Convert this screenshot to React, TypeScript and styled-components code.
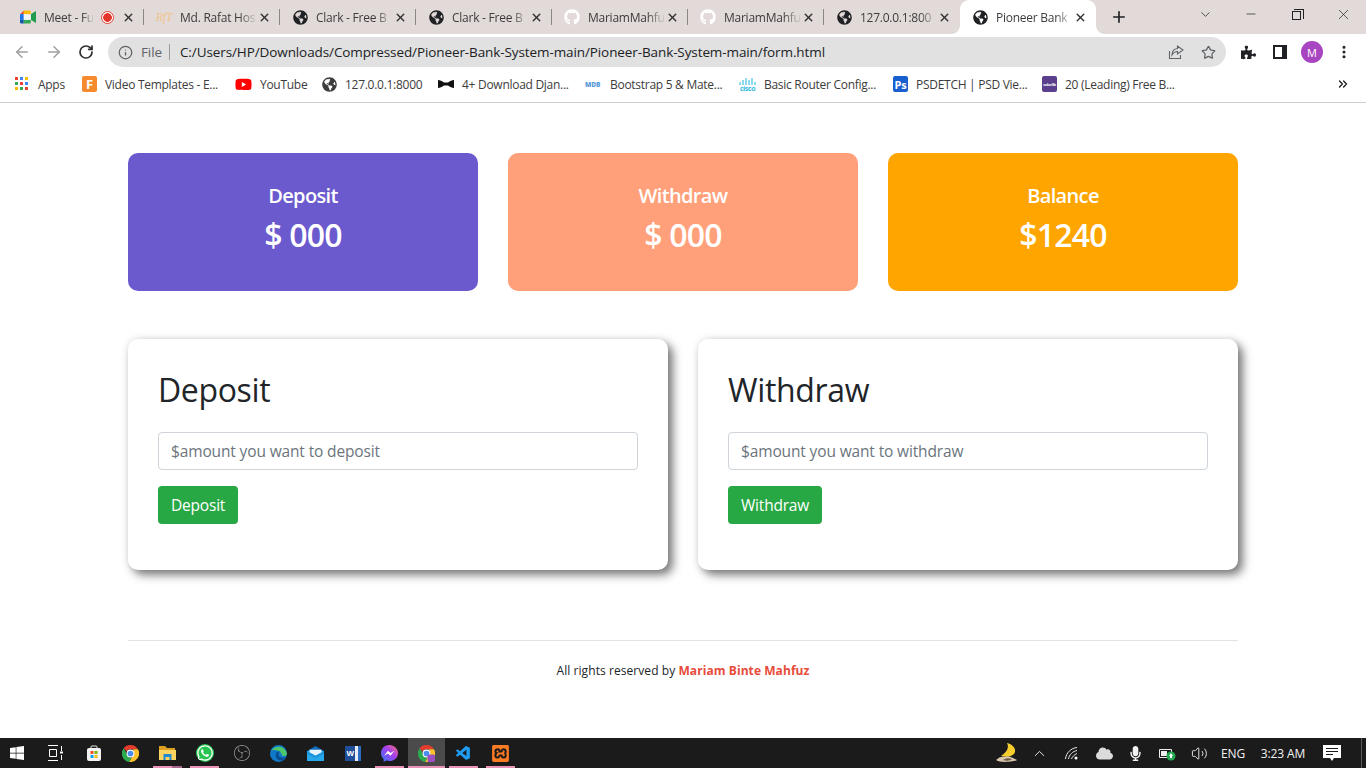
import React from 'react';
import styled, { createGlobalStyle } from 'styled-components';
import {
  ArrowLeft,
  ArrowRight,
  ChevronDown,
  ChevronUp,
  ChevronsRight,
  Info,
  Minus,
  MoreVertical,
  Plus,
  RotateCw,
  Star,
  Volume2,
  X,
} from 'lucide-react';
import { FaGithub, FaGlobeAmericas, FaPuzzlePiece, FaWhatsapp, FaWindows, FaYoutube, FaCloud, FaMicrophone } from 'react-icons/fa';
import { SiObsstudio, SiXampp } from 'react-icons/si';
import { VscVscode } from 'react-icons/vsc';

const GlobalStyle = createGlobalStyle`
  html, body {
    margin: 0;
    padding: 0;
    height: 100%;
    overflow: hidden;
    background: #fff;
  }
  * {
    box-sizing: border-box;
  }
  body {
    font-family: "Open Sans", "Noto Sans", "Liberation Sans", sans-serif;
    color: #212529;
  }
`;

const Screen = styled.div`
  width: 1366px;
  height: 768px;
  display: flex;
  flex-direction: column;
  overflow: hidden;
`;

/* browser chrome */

const TabStrip = styled.div`
  height: 34px;
  flex: none;
  display: flex;
  align-items: stretch;
  padding-left: 8px;
  background: #e2dad8;
`;

const Tab = styled.div<{ $active?: boolean; $divided?: boolean }>`
  position: relative;
  width: 136px;
  flex: none;
  display: flex;
  align-items: center;
  padding: 0 9.5px 0 12px;
  gap: 8px;
  font-size: 12px;
  letter-spacing: -0.25px;
  color: #3c3c3c;
  background: ${(p) => (p.$active ? '#fff' : 'transparent')};
  border-radius: ${(p) => (p.$active ? '9px 9px 0 0' : '0')};

  &::after {
    content: '';
    display: ${(p) => (p.$divided ? 'block' : 'none')};
    position: absolute;
    right: 0;
    top: 9px;
    bottom: 9px;
    width: 1px;
    background: #8b8584;
  }
`;

const TabFlare = styled.span<{ $side: 'left' | 'right' }>`
  position: absolute;
  bottom: 0;
  ${(p) => p.$side}: -8px;
  width: 8px;
  height: 8px;
  background: radial-gradient(
    circle at ${(p) => (p.$side === 'left' ? '0 0' : '100% 0')},
    transparent 7.5px,
    #fff 8px
  );
`;

const TabTitle = styled.span`
  flex: 1;
  min-width: 0;
  overflow: hidden;
  white-space: nowrap;
  -webkit-mask-image: linear-gradient(90deg, #000 78%, rgba(0, 0, 0, 0.1));
  mask-image: linear-gradient(90deg, #000 78%, rgba(0, 0, 0, 0.1));
`;

const Favicon = styled.span`
  width: 16px;
  height: 16px;
  flex: none;
  display: flex;
  align-items: center;
  justify-content: center;
  color: #202124;
`;

const TabClose = styled.span`
  width: 13px;
  flex: none;
  margin-left: -6px;
  display: flex;
  color: #303030;
`;

const RecordDot = styled.span`
  width: 13px;
  height: 13px;
  flex: none;
  margin-right: 6px;
  border-radius: 50%;
  border: 1px solid #e0463b;
  background: radial-gradient(circle, #e3352a 0 4px, #fff 4.6px);
`;

const NewTab = styled.div`
  width: 46px;
  display: flex;
  align-items: center;
  justify-content: center;
  color: #202124;
`;

const WindowControls = styled.div`
  margin-left: auto;
  display: flex;
`;

const WindowButton = styled.div`
  width: 46px;
  padding-bottom: 6px;
  display: flex;
  align-items: center;
  justify-content: center;
  color: #202124;
`;

const RestoreIcon = styled.span`
  position: relative;
  width: 9px;
  height: 9px;
  margin: 2px 0 0 -2px;
  border: 1px solid #202124;

  &::before {
    content: '';
    position: absolute;
    left: 1px;
    top: -3px;
    width: 9px;
    height: 9px;
    border-top: 1px solid #202124;
    border-right: 1px solid #202124;
  }
`;

const Toolbar = styled.div`
  height: 36px;
  flex: none;
  display: flex;
  align-items: center;
  padding-left: 6px;
  background: #fff;
`;

const NavButton = styled.div<{ $dim?: boolean }>`
  width: 32px;
  height: 32px;
  flex: none;
  display: flex;
  align-items: center;
  justify-content: center;
  color: ${(p) => (p.$dim ? '#a0a0a0' : '#303030')};
`;

const AddressBar = styled.div`
  width: 1118px;
  height: 30px;
  margin-left: 6px;
  flex: none;
  display: flex;
  align-items: center;
  padding: 0 10px;
  border-radius: 15px;
  background: #e1e1e1;
  font-size: 13.5px;
  letter-spacing: -0.1px;
`;

const SiteInfo = styled.span`
  display: flex;
  align-items: center;
  gap: 8px;
  color: #5f6368;
  padding-right: 7px;
  margin-right: 10px;
  border-right: 1px solid #9a9a9a;
  line-height: 16px;
`;

const Url = styled.span`
  flex: 1;
  color: #202124;
`;

const AddressActions = styled.span`
  display: flex;
  align-items: center;
  gap: 17px;
  color: #5f6368;
`;

const ProfileTools = styled.div`
  display: flex;
  align-items: center;
  margin-left: 6px;
  color: #202124;
`;

const ProfileTool = styled.span`
  width: 32px;
  flex: none;
  display: flex;
  align-items: center;
  justify-content: center;
`;

const SidePanelIcon = styled.span`
  width: 14px;
  height: 14px;
  border: 2px solid #202124;
  border-right-width: 5px;
`;

const Avatar = styled.span`
  width: 22px;
  height: 22px;
  border-radius: 50%;
  background: #a845c0;
  color: #fff;
  font-size: 11px;
  display: flex;
  align-items: center;
  justify-content: center;
`;

const BookmarkBar = styled.div`
  height: 33px;
  flex: none;
  display: flex;
  align-items: center;
  padding: 0 0 4px 15px;
  background: #fff;
  border-bottom: 1px solid #cfcfcf;
  font-size: 12px;
  letter-spacing: -0.28px;
  color: #3c3c3c;
`;

const Bookmark = styled.div<{ $width: number }>`
  width: ${(p) => p.$width}px;
  flex: none;
  display: flex;
  align-items: center;
  gap: 8px;
  white-space: nowrap;
`;

const BookmarkOverflow = styled.div`
  margin-left: auto;
  padding-right: 16px;
  display: flex;
  color: #202124;
`;

const AppsGrid = styled.span`
  width: 15px;
  height: 14px;
  flex: none;
  display: grid;
  grid-template-columns: repeat(3, 3px);
  grid-auto-rows: 3px;
  gap: 2px;
`;

const AppsDot = styled.i<{ $color: string }>`
  background: ${(p) => p.$color};
`;

const BadgeIcon = styled.span<{ $bg: string; $size?: number }>`
  width: 15px;
  height: 16px;
  flex: none;
  display: flex;
  align-items: center;
  justify-content: center;
  overflow: hidden;
  border-radius: 2px;
  background: ${(p) => p.$bg};
  color: #fff;
  font-weight: 700;
  letter-spacing: -0.3px;
  font-size: ${(p) => p.$size || 11}px;
`;

const MdbMark = styled.span`
  width: 17px;
  flex: none;
  font-size: 6.5px;
  letter-spacing: 0;
  font-weight: 800;
  color: #5a9bd8;
`;

const CiscoMark = styled.span`
  width: 17px;
  flex: none;
  display: flex;
  flex-direction: column;
  align-items: center;
  color: #19b5dc;
  font: 700 6.5px/6px "Liberation Sans", sans-serif;
`;

/* page */

const Page = styled.main`
  flex: 1;
  min-height: 0;
  display: flex;
  flex-direction: column;
  align-items: center;
  padding-top: 50px;
  background: #fff;
`;

const Container = styled.div`
  width: 1110px;
`;

const StatRow = styled.section`
  display: grid;
  grid-template-columns: repeat(3, 1fr);
  gap: 30px;
`;

const StatCard = styled.div<{ $bg: string }>`
  height: 138px;
  display: flex;
  flex-direction: column;
  align-items: center;
  justify-content: center;
  padding-bottom: 4px;
  border-radius: 10px;
  background: ${(p) => p.$bg};
  color: #fff;
  font-weight: 600;
`;

const StatLabel = styled.div`
  font-size: 20px;
  letter-spacing: -0.65px;
  line-height: 28px;
`;

const StatValue = styled.div`
  font-size: 32px;
  letter-spacing: -0.8px;
  line-height: 48px;
  margin-top: 1px;
`;

const FormRow = styled.section`
  display: grid;
  grid-template-columns: repeat(2, 1fr);
  gap: 30px;
  margin-top: 48px;
`;

const FormCard = styled.form`
  height: 231px;
  padding: 30px;
  border-radius: 10px;
  background: #fff;
  box-shadow: 5px 5px 10px rgba(0, 0, 0, 0.5), 0 0 8px rgba(0, 0, 0, 0.1);
`;

const FormTitle = styled.h2`
  margin: 0 0 21px;
  font-size: 32px;
  font-weight: 500;
  letter-spacing: -0.35px;
  line-height: 42px;
  color: #212529;
`;

const AmountInput = styled.input`
  display: block;
  width: 100%;
  height: 38px;
  padding: 0 12px;
  border: 1px solid #ced4da;
  border-radius: 4px;
  font: inherit;
  font-size: 15.5px;
  letter-spacing: -0.14px;
  color: #495057;

  &::placeholder {
    color: #6c757d;
    opacity: 1;
  }
`;

const SubmitButton = styled.button`
  display: block;
  height: 38px;
  margin-top: 16px;
  padding: 0 13px;
  border: 0;
  border-radius: 4px;
  background: #28a745;
  color: #fff;
  font: inherit;
  font-size: 15.5px;
  letter-spacing: -0.2px;
`;

const Footer = styled.footer`
  margin-top: 70px;
  border-top: 1px solid #e3e3e3;
  padding-top: 21px;
  text-align: center;
  font-size: 12px;
  letter-spacing: 0.07px;
  line-height: 18px;
`;

const Author = styled.span`
  color: #e74c3c;
  font-weight: 700;
`;

/* taskbar */

const Taskbar = styled.footer`
  height: 30px;
  flex: none;
  display: flex;
  align-items: stretch;
  background: #1b1b1b;
  color: #f2f2f2;
`;

const StartButton = styled.div`
  width: 34px;
  display: flex;
  align-items: center;
  justify-content: center;
  color: #fff;
`;

const TaskItem = styled.div<{ $width?: number; $active?: boolean; $open?: boolean; $stacked?: boolean }>`
  position: relative;
  width: ${(p) => p.$width || 37}px;
  flex: none;
  display: flex;
  align-items: center;
  justify-content: center;
  background: ${(p) => (p.$active ? '#4b4b4b' : 'transparent')};

  &::after {
    content: '';
    display: ${(p) => (p.$open ? 'block' : 'none')};
    position: absolute;
    left: ${(p) => (p.$active ? 0 : 4)}px;
    right: ${(p) => (p.$active ? 0 : 4)}px;
    bottom: 0;
    height: 2px;
    background: ${(p) => (p.$stacked ? 'linear-gradient(90deg, #eb92b8 0 66%, #a8678a 66%)' : '#eb92b8')};
  }
`;

const Tray = styled.div`
  margin-left: auto;
  display: flex;
  align-items: center;
  font-size: 12px;
  letter-spacing: -0.1px;
`;

const TrayItem = styled.div<{ $width: number }>`
  width: ${(p) => p.$width}px;
  flex: none;
  display: flex;
  align-items: center;
  justify-content: center;
  color: #f2f2f2;
  white-space: nowrap;
`;

const ShowDesktop = styled.div`
  width: 5px;
  height: 30px;
  margin-left: 12px;
  border-left: 1px solid #5a5a5a;
`;

const Globe = () => <FaGlobeAmericas size={15} />;

const MeetIcon = () => (
  <svg width="17" height="14" viewBox="0 0 17 14">
    <path d="M0 4 4 0v4z" fill="#ea4335" />
    <path d="M4 0h6a1.500 1.500 0 0 1 1.500 1.500V4H4z" fill="#fbbc04" />
    <path d="M0 4h4v6H0z" fill="#1a73e8" />
    <path d="M0 10h4v4H1.500A1.500 1.500 0 0 1 0 12.500z" fill="#1558b0" />
    <path d="M4 10h7.500v2.500A1.500 1.500 0 0 1 10 14H4z" fill="#34a853" />
    <path d="M11.500 4v6L17 13.500V.5z" fill="#1f9d4d" />
    <path d="M4 4h7.500v6H4z" fill="#f4f4f4" />
  </svg>
);

const ChromeIcon = ({ badge }: { badge?: boolean }) => (
  <svg width="17" height="17" viewBox="0 0 16 16">
    <path d="M8 0a8 8 0 0 1 7 4H8a4 4 0 0 0-3.600 2.200L1.600 3A8 8 0 0 1 8 0z" fill="#e33b2e" />
    <path d="M1.600 3l3 5.200A4 4 0 0 0 9 11.800L6.800 15.900A8 8 0 0 1 1.600 3z" fill="#2da94f" />
    <path d="M15 4a8 8 0 0 1-8.200 11.900L10 10a4 4 0 0 0 0-6z" fill="#fdc12d" />
    <circle cx="8" cy="8" r="3.200" fill="#4a8cf0" stroke="#fff" />
    {badge && <rect x="9" y="9" width="7" height="7" rx="1.500" fill="#9b4fc0" />}
  </svg>
);

const TaskView = () => (
  <svg width="16" height="16" viewBox="0 0 16 16" fill="none" stroke="#fff">
    <path d="M1 .5h10M1 15.500h10M2.500 4.500h7v7h-7zM14.500 1v5M14.500 10v5" />
    <path d="M13 7.500h3" strokeWidth="2" />
  </svg>
);

const StoreIcon = () => (
  <svg width="16" height="16" viewBox="0 0 16 16">
    <rect x="1" y="3" width="14" height="13" rx="2" fill="#f4f4f4" />
    <path d="M5 4V2a1 1 0 0 1 1-1h4a1 1 0 0 1 1 1v2" fill="none" stroke="#e8e8e8" />
    <rect x="4.500" y="6" width="3" height="3" fill="#f25022" />
    <rect x="8.500" y="6" width="3" height="3" fill="#7fba00" />
    <rect x="4.500" y="10" width="3" height="3" fill="#00a4ef" />
    <rect x="8.500" y="10" width="3" height="3" fill="#ffb900" />
  </svg>
);

const FolderIcon = () => (
  <svg width="17" height="16" viewBox="0 0 17 16">
    <path d="M0 1h6l2 2h8v3H0z" fill="#dd9f20" />
    <path d="M0 5h17v10H0z" fill="#fcd462" />
    <path d="M4.500 9h8v6h-2v-3h-4v3h-2z" fill="#1f8ad2" />
  </svg>
);

const EdgeIcon = () => (
  <svg width="17" height="17" viewBox="0 0 16 16">
    <circle cx="8" cy="8" r="8" fill="#0f78c8" />
    <path d="M1 6c2-5 12-7 15 2 0 3-5 3-5 1 0-3-8-6-10-3z" fill="#4ec76c" />
    <path d="M6 12c-2-4 1-7 4-6-3 0-3 6 2 6 1 0 2 0 3-1-2 4-7 5-9 1z" fill="#0a4c91" />
  </svg>
);

const MailIcon = () => (
  <svg width="17" height="15" viewBox="0 0 17 15">
    <path d="M0 5 8.500 0 17 5v10H0z" fill="#0f6cbd" />
    <path d="M0 5h17v10H0z" fill="#28a8ea" />
    <path d="M2.500 3.800h12V6.500l-6 3-6-3z" fill="#e8f4fc" />
    <path d="M0 5l8.500 5L17 5v3l-8.500 4L0 8z" fill="#1b93dd" />
  </svg>
);

const WordIcon = styled.span`
  width: 16px;
  height: 15px;
  display: flex;
  align-items: center;
  padding-left: 2px;
  background: linear-gradient(90deg, #1e4f98 0 62%, #e7eef8 62% 80%, #2b6bc0 80%);
  color: #fff;
  font: 700 8px "Liberation Sans", sans-serif;
`;

const MessengerIcon = () => (
  <svg width="17" height="17" viewBox="0 0 16 16">
    <defs>
      <linearGradient id="messengerFill" x1="0" y1="1" x2="1" y2="0">
        <stop offset="0" stopColor="#2f7bf6" />
        <stop offset="0.55" stopColor="#a33ff0" />
        <stop offset="1" stopColor="#fb6f7a" />
      </linearGradient>
    </defs>
    <path d="M8 0C3.500 0 0 3.300 0 7.700c0 2.300 1 4.300 2.500 5.700V16l2.500-1.300c1 .3 2 .4 3 .4 4.500 0 8-3.300 8-7.400S12.500 0 8 0z" fill="url(#messengerFill)" />
    <path d="M3 10l3.500-4.500 2.500 2 3.500-2-3.500 4.500-2.500-2z" fill="#fff" />
  </svg>
);

const CiscoBars = () => (
  <svg width="17" height="9" viewBox="0 0 17 9" stroke="#19b5dc" strokeWidth="1">
    <path d="M1 5v3M4 3v5M7 1v7M10 3v5M13 1v7M16 5v3" />
  </svg>
);

const WifiIcon = () => (
  <svg width="16" height="16" viewBox="0 0 16 16" fill="none" stroke="#e8e8e8">
    <path d="M1.500 14C2 8 7 3 13 2.500M4.500 14C5 10 9 6 13 5.500M7.500 14C8 12 10.500 9.500 13 8.500" />
    <circle cx="12" cy="13" r="1.500" fill="#fff" stroke="none" />
  </svg>
);

const BatteryIcon = () => (
  <svg width="17" height="15" viewBox="0 0 17 15">
    <path d="M.5 3.500h12v8H.5z" fill="none" stroke="#eee" />
    <path d="M2 5h6v5H2z" fill="#eee" />
    <circle cx="12" cy="10" r="4.500" fill="#23a84f" />
    <path d="M12 7l2 3h-1v2h-2v-2h-1z" fill="#fff" />
  </svg>
);

const MoonIcon = () => (
  <svg width="24" height="22" viewBox="0 0 24 22">
    <path d="M12 1c2 4 1 8-6 13 6 2 13 0 14-4 1-4-3-8-8-9z" fill="#f5cd2e" />
    <path d="M1 18c3-3 6-4 9-3 3-1 6 0 8 1l4 2c-3 2-18 3-21 0z" fill="#d9c8ae" />
    <path d="M8 18c3-2 6-2 9-1-2 2-6 2-9 1z" fill="#6d5a48" />
  </svg>
);

const NotificationIcon = () => (
  <svg width="18" height="17" viewBox="0 0 18 17">
    <path d="M0 0h18v13h-7l-2 3-2-3H0z" fill="#fff" />
    <path d="M3 3.500h12M3 6.500h12M3 9.500h7" stroke="#1b1b1b" />
  </svg>
);

const ShareIcon = () => (
  <svg width="16" height="16" viewBox="0 0 16 16" fill="none" stroke="#5f6368" strokeWidth="1.100">
    <path d="M1.500 7v7.500h11V11" />
    <path d="M9.500 2v2.500C5 5 4 8 4 11c1.500-2.500 3-3.500 5.500-3.500V10L15 6z" />
  </svg>
);

const BowIcon = () => (
  <svg width="16" height="8" viewBox="0 0 16 8">
    <path d="M0 0c2 0 4 1 6 2.500h4C12 1 14 0 16 0v8c-2 0-4-1-6-2.500H6C4 7 2 8 0 8z" fill="#111" />
  </svg>
);

const RafatMark = styled.span`
  font: italic 12px "Liberation Serif", serif;
  color: #efc48a;
`;

const tabs = [
  { title: 'Meet - Fu', icon: <MeetIcon />, recording: true },
  { title: 'Md. Rafat Hos', icon: <RafatMark>RfT</RafatMark> },
  { title: 'Clark - Free B', icon: <Globe /> },
  { title: 'Clark - Free B', icon: <Globe /> },
  { title: 'MariamMahfu', icon: <FaGithub size={16} color="#fff" /> },
  { title: 'MariamMahfu', icon: <FaGithub size={16} color="#fff" /> },
  { title: '127.0.0.1:800', icon: <Globe /> },
  { title: 'Pioneer Bank', icon: <Globe />, active: true },
];

const appsColors = ['#ea4335', '#4285f4', '#fbbc04', '#34a853', '#ea4335', '#4285f4', '#fbbc04', '#34a853', '#ea4335'];

const bookmarks = [
  { width: 67, label: 'Apps', icon: <AppsGrid>{appsColors.map((c, i) => <AppsDot key={i} $color={c} />)}</AppsGrid> },
  { width: 153, label: 'Video Templates - E...', icon: <BadgeIcon $bg="#f58a2e" $size={13}>F</BadgeIcon> },
  { width: 87, label: 'YouTube', icon: <FaYoutube size={17} color="#f00" /> },
  { width: 116, label: '127.0.0.1:8000', icon: <Globe /> },
  { width: 147, label: '4+ Download Djan...', icon: <BowIcon /> },
  { width: 154, label: 'Bootstrap 5 & Mate...', icon: <MdbMark>MDB</MdbMark> },
  { width: 154, label: 'Basic Router Config...', icon: <CiscoMark><CiscoBars />cisco</CiscoMark> },
  { width: 149, label: 'PSDETCH | PSD Vie...', icon: <BadgeIcon $bg="#1a5fd0">Ps</BadgeIcon> },
  { width: 150, label: '20 (Leading) Free B...', icon: <BadgeIcon $bg="#5b3f8c" $size={4}>colorlib</BadgeIcon> },
];

const stats = [
  { label: 'Deposit', value: '$ 000', bg: '#6a5acd' },
  { label: 'Withdraw', value: '$ 000', bg: '#ffa07a' },
  { label: 'Balance', value: '$1240', bg: '#ffa500' },
];

const forms = [
  { title: 'Deposit', placeholder: '$amount you want to deposit' },
  { title: 'Withdraw', placeholder: '$amount you want to withdraw' },
];

type TaskEntry = { icon: React.ReactNode; width?: number; open?: boolean; active?: boolean; stacked?: boolean };

const taskItems: TaskEntry[] = [
  { icon: <TaskView />, width: 41 },
  { icon: <StoreIcon /> },
  { icon: <ChromeIcon /> },
  { icon: <FolderIcon />, open: true, stacked: true },
  { icon: <FaWhatsapp size={18} color="#fff" style={{ background: '#27c451', borderRadius: '50%' }} />, open: true },
  { icon: <SiObsstudio size={16} color="#9a9a9a" /> },
  { icon: <EdgeIcon /> },
  { icon: <MailIcon /> },
  { icon: <WordIcon>W</WordIcon> },
  { icon: <MessengerIcon />, open: true },
  { icon: <ChromeIcon badge />, open: true, active: true },
  { icon: <VscVscode size={17} color="#1f9cf0" />, open: true },
  { icon: <SiXampp size={17} color="#fb7a24" />, open: true },
];

export default function App() {
  return (
    <Screen>
      <GlobalStyle />
      <TabStrip>
        {tabs.map((tab, i) => (
          <Tab key={i} $active={tab.active} $divided={!tab.active && i < tabs.length - 2}>
            {tab.active && <TabFlare $side="left" />}
            <Favicon>{tab.icon}</Favicon>
            <TabTitle>{tab.title}</TabTitle>
            {tab.recording && <RecordDot />}
            <TabClose>
              <X size={13} strokeWidth={2.6} />
            </TabClose>
            {tab.active && <TabFlare $side="right" />}
          </Tab>
        ))}
        <NewTab>
          <Plus size={18} strokeWidth={2.2} />
        </NewTab>
        <WindowControls>
          <WindowButton>
            <ChevronDown size={15} strokeWidth={1.2} />
          </WindowButton>
          <WindowButton>
            <Minus size={14} strokeWidth={1.2} />
          </WindowButton>
          <WindowButton>
            <RestoreIcon />
          </WindowButton>
          <WindowButton>
            <X size={17} strokeWidth={1} />
          </WindowButton>
        </WindowControls>
      </TabStrip>

      <Toolbar>
        <NavButton $dim>
          <ArrowLeft size={18} />
        </NavButton>
        <NavButton $dim>
          <ArrowRight size={18} />
        </NavButton>
        <NavButton>
          <RotateCw size={16} strokeWidth={2.6} />
        </NavButton>
        <AddressBar>
          <SiteInfo>
            <Info size={15} />
            File
          </SiteInfo>
          <Url>C:/Users/HP/Downloads/Compressed/Pioneer-Bank-System-main/Pioneer-Bank-System-main/form.html</Url>
          <AddressActions>
            <ShareIcon />
            <Star size={15} />
          </AddressActions>
        </AddressBar>
        <ProfileTools>
          <ProfileTool>
            <FaPuzzlePiece size={15} />
          </ProfileTool>
          <ProfileTool>
            <SidePanelIcon />
          </ProfileTool>
          <ProfileTool>
            <Avatar>M</Avatar>
          </ProfileTool>
          <ProfileTool>
            <MoreVertical size={16} strokeWidth={2.6} />
          </ProfileTool>
        </ProfileTools>
      </Toolbar>

      <BookmarkBar>
        {bookmarks.map((b) => (
          <Bookmark key={b.label} $width={b.width}>
            {b.icon}
            {b.label}
          </Bookmark>
        ))}
        <BookmarkOverflow>
          <ChevronsRight size={14} strokeWidth={2.4} />
        </BookmarkOverflow>
      </BookmarkBar>

      <Page>
        <Container>
          <StatRow>
            {stats.map((s) => (
              <StatCard key={s.label} $bg={s.bg}>
                <StatLabel>{s.label}</StatLabel>
                <StatValue>{s.value}</StatValue>
              </StatCard>
            ))}
          </StatRow>
          <FormRow>
            {forms.map((f) => (
              <FormCard key={f.title} onSubmit={(e) => e.preventDefault()}>
                <FormTitle>{f.title}</FormTitle>
                <AmountInput placeholder={f.placeholder} />
                <SubmitButton>{f.title}</SubmitButton>
              </FormCard>
            ))}
          </FormRow>
          <Footer>
            All rights reserved by <Author>Mariam Binte Mahfuz</Author>
          </Footer>
        </Container>
      </Page>

      <Taskbar>
        <StartButton>
          <FaWindows size={16} />
        </StartButton>
        {taskItems.map((item, i) => (
          <TaskItem key={i} $width={item.width} $active={item.active} $open={item.open} $stacked={item.stacked}>
            {item.icon}
          </TaskItem>
        ))}
        <Tray>
          <TrayItem $width={32}><MoonIcon /></TrayItem>
          <TrayItem $width={32}><ChevronUp size={17} strokeWidth={1.3} /></TrayItem>
          <TrayItem $width={34}><WifiIcon /></TrayItem>
          <TrayItem $width={30}><FaCloud size={17} color="#dcdcdc" /></TrayItem>
          <TrayItem $width={32}><FaMicrophone size={15} /></TrayItem>
          <TrayItem $width={32}><BatteryIcon /></TrayItem>
          <TrayItem $width={32}><Volume2 size={17} strokeWidth={1.3} /></TrayItem>
          <TrayItem $width={36}>ENG</TrayItem>
          <TrayItem $width={64}>3:23 AM</TrayItem>
          <TrayItem $width={34}><NotificationIcon /></TrayItem>
          <ShowDesktop />
        </Tray>
      </Taskbar>
    </Screen>
  );
}
